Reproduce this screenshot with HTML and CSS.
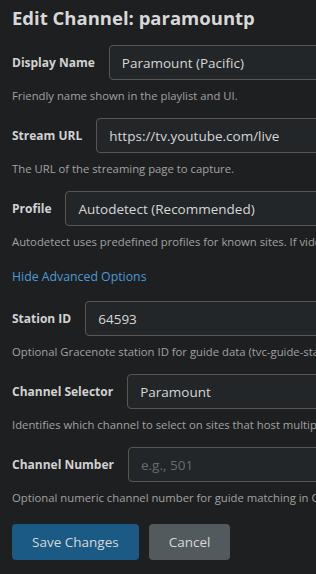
FILE: index.html
```html
<!DOCTYPE html>
<html lang="en">
<head>
    <meta charset="UTF-8">
    <meta name="viewport" content="width=device-width, initial-scale=1.0">
    <title>Edit Channel</title>
    <link rel="stylesheet" href="styles.css">
</head>
<body>
    <div class="panel">
        <h2>Edit Channel: paramountp</h2>

        <form class="channel-form">
            <!-- basic fields -->
            <div class="field">
                <div class="row">
                    <label for="name">Display Name</label>
                    <input id="name" type="text" value="Paramount (Pacific)">
                </div>
                <p class="help">Friendly name shown in the playlist and UI.</p>
            </div>

            <div class="field">
                <div class="row">
                    <label for="url">Stream URL</label>
                    <input id="url" type="text" value="https://tv.youtube.com/live">
                </div>
                <p class="help">The URL of the streaming page to capture.</p>
            </div>

            <div class="field">
                <div class="row">
                    <label for="profile">Profile</label>
                    <div class="select">Autodetect (Recommended)</div>
                </div>
                <p class="help">Autodetect uses predefined profiles for known sites. If video doesn't play, pick one manually.</p>
            </div>

            <a class="toggle" href="#">Hide Advanced Options</a>

            <!-- advanced fields -->
            <div class="field">
                <div class="row">
                    <label for="station">Station ID</label>
                    <input id="station" type="text" value="64593">
                </div>
                <p class="help">Optional Gracenote station ID for guide data (tvc-guide-stationid).</p>
            </div>

            <div class="field">
                <div class="row">
                    <label for="selector">Channel Selector</label>
                    <input id="selector" type="text" value="Paramount">
                </div>
                <p class="help">Identifies which channel to select on sites that host multiple channels.</p>
            </div>

            <div class="field">
                <div class="row">
                    <label for="number">Channel Number</label>
                    <input id="number" type="text" placeholder="e.g., 501">
                </div>
                <p class="help">Optional numeric channel number for guide matching in Channels DVR.</p>
            </div>

            <div class="actions">
                <button type="button" class="btn btn-primary">Save Changes</button>
                <button type="button" class="btn btn-secondary">Cancel</button>
            </div>
        </form>
    </div>
</body>
</html>
```

FILE: styles.css
```css
html, body {
    margin: 0;
    padding: 0;
    background-color: #1e1f21;
    overflow: hidden;
}

body {
    font-family: "Open Sans", "Noto Sans", sans-serif;
    color: #d4d4d4;
}

.panel {
    width: 560px;
    padding: 4px 12px 0 12px;
}

h2 {
    margin: 0 0 13px 0;
    font-size: 18.5px;
    font-weight: 700;
    color: #d8d8d8;
    line-height: 28px;
}

.field {
    margin-bottom: 14px;
}

.row {
    display: flex;
    align-items: center;
    gap: 14px;
}

label {
    font-size: 12px;
    font-weight: 700;
    color: #d2d2d2;
    white-space: nowrap;
}

input,
.select {
    flex: 1;
    box-sizing: border-box;
    height: 35px;
    padding: 0 12px;
    background-color: #232628;
    border: 1px solid #5b5750;
    border-radius: 4px;
    color: #d6d6d6;
    font-family: inherit;
    font-size: 13.5px;
    outline: none;
}

.select {
    display: flex;
    align-items: center;
}

input::placeholder {
    color: #6a6b6c;
}

.help {
    margin: 7px 0 0 0;
    font-size: 11.3px;
    line-height: 17px;
    color: #a2a2a2;
    white-space: nowrap;
}

/* margins below collapse with the 14px field margin */
.toggle {
    display: block;
    margin: 19px 0 16px 0;
    font-size: 12.3px;
    line-height: 16px;
    color: #4a9bd6;
    text-decoration: none;
}

.actions {
    display: flex;
    gap: 10px;
    margin-top: 18px;
}

.btn {
    height: 36px;
    padding: 0 20px;
    border: none;
    border-radius: 4px;
    font-family: inherit;
    font-size: 13.5px;
    color: #d8d8d8;
    cursor: pointer;
}

.btn-primary {
    background-color: #1a5a85;
}

.btn-secondary {
    background-color: #535a5d;
}
```
